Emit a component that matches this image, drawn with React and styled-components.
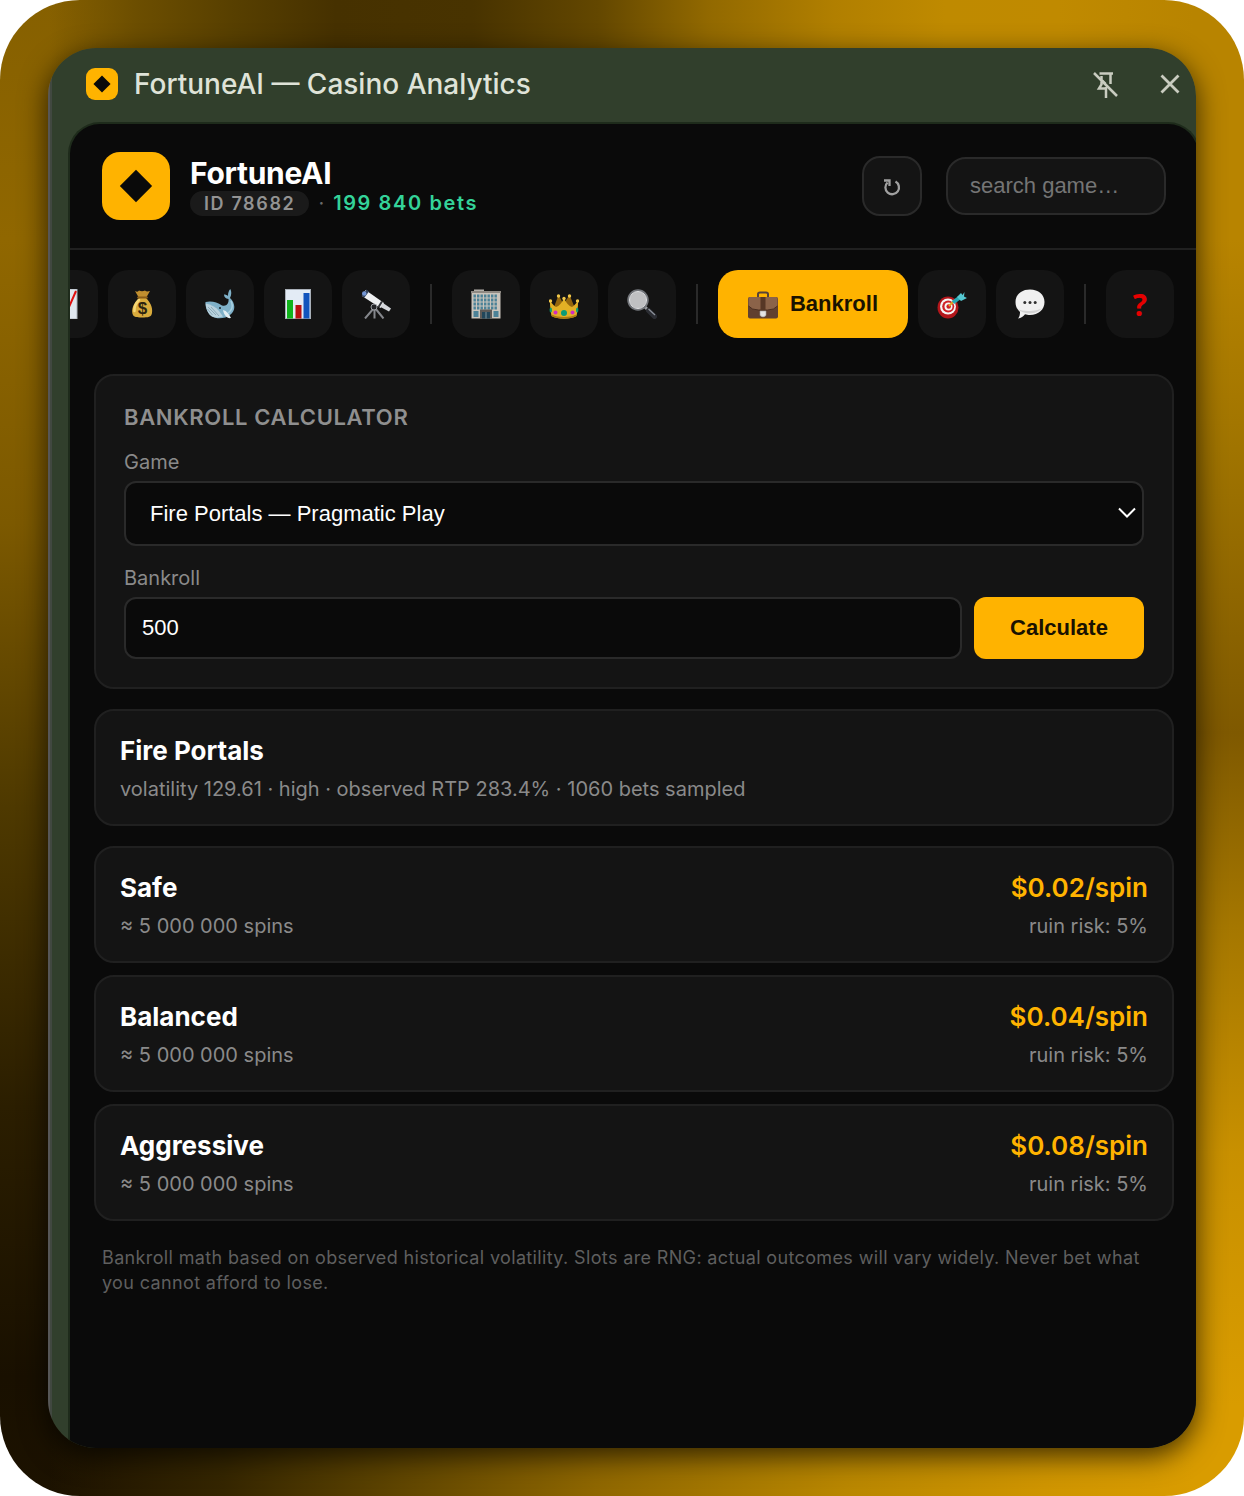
import { useState } from "react";
import styled, { createGlobalStyle, css } from "styled-components";

const GlobalStyle = createGlobalStyle`
  * {
    box-sizing: border-box;
  }
  body {
    margin: 0;
    background: #ffffff;
    font-family: Inter, "Liberation Sans", sans-serif;
  }
  button, input, select {
    font-family: "Liberation Sans", Arial, sans-serif;
    font-size: 22px;
  }
  h1, h2, h3, p {
    margin: 0;
  }
`;

// the top and bottom bands fade out at their ends into the side bands
const Backdrop = styled.div`
  display: flex;
  min-height: 100vh;
  padding: 48px;
  border-radius: 80px;
  background:
    linear-gradient(90deg, transparent 4%, #6c4e00 11%, #573f00 19%, #463100 27%, #483300 38%, #634700 48%, #926900 57%, #b17f00 67%, #bf8a00 76%, #c08a00 85%, #b8840000 96%) top / 100% 120px no-repeat,
    linear-gradient(90deg, transparent 4%, #291c00 11%, #352600 18%, #5c4300 31%, #8f6700 48%, #b98700 68%, #cf9500 84%, #d99c0000 96%) bottom / 100% 120px no-repeat,
    linear-gradient(180deg, #866000, #906700 16%, #7c5900 35%, #4e3900 54%, #2b1e00 74%, #191000 92%, #1c1200) left / 200px 100% no-repeat,
    linear-gradient(180deg, #b88400, #b88400 16%, #a07400 30%, #7f5900 49%, #a57700 62%, #c89000 77%, #d99c00 94%) right / 200px 100% no-repeat;
`;

const Window = styled.div`
  flex: 1;
  min-width: 0;
  display: flex;
  flex-direction: column;
  border-radius: 48px;
  overflow: hidden;
  background: linear-gradient(90deg, #565656 2px, #414840 2px 4px, #313f2c 4px);
  box-shadow: 0 8px 28px rgba(0, 0, 0, 0.7);
`;

const TitleBar = styled.div`
  display: flex;
  align-items: center;
  gap: 16px;
  height: 74px;
  padding: 0 12px 2px 38px;
  color: #dfe3d8;
  font-size: 28px;
  font-weight: 500;
`;

const TitleText = styled.span`
  flex: 1;
`;

const WindowButtons = styled.div`
  display: flex;
  gap: 37px;
`;

const WindowButton = styled.button`
  display: flex;
  padding: 0;
  border: none;
  background: none;
  color: #c9ccc0;
`;

const Panel = styled.main`
  flex: 1;
  min-width: 0;
  margin: 0 -4px 0 20px;
  border: 2px solid #1e2b1b;
  border-bottom: none;
  border-radius: 32px 32px 0 0;
  overflow: hidden;
  background: #0a0a0a;
`;

const Header = styled.header`
  display: flex;
  align-items: center;
  padding: 28px 32px;
  border-bottom: 2px solid #202020;
`;

const Brand = styled.div`
  flex: 1;
  margin-left: 20px;

  h1 {
    color: #ffffff;
    font-size: 30px;
    line-height: 35px;
    font-weight: 700;
    letter-spacing: -0.01em;
  }
`;

const Meta = styled.div`
  display: flex;
  align-items: center;
  gap: 9px;
  color: #6b6b6b;
  font-size: 20px;
  line-height: 25px;
`;

const IdBadge = styled.span`
  padding: 0 14px;
  border-radius: 13px;
  background: #1a1a1a;
  color: #939393;
  font-size: 18px;
  font-weight: 600;
  letter-spacing: 0.09em;
`;

const BetCount = styled.span`
  color: #34d399;
  font-weight: 600;
  letter-spacing: 0.08em;
`;

const RefreshButton = styled.button`
  display: grid;
  place-items: center;
  width: 60px;
  height: 60px;
  margin-right: 24px;
  border: 2px solid #2a2a2a;
  border-radius: 18px;
  background: #141414;
  color: #a0a0a0;
`;

const Search = styled.input`
  width: 220px;
  height: 58px;
  padding: 0 22px;
  border: 2px solid #2a2a2a;
  border-radius: 20px;
  background: #141414;
  color: #ffffff;

  &::placeholder {
    color: #757575;
  }
`;

const Tabs = styled.nav`
  display: flex;
  justify-content: flex-end;
  align-items: center;
  gap: 10px;
  padding: 20px 24px;
  overflow: hidden;
`;

const Tab = styled.button`
  flex: none;
  display: flex;
  align-items: center;
  justify-content: center;
  gap: 12px;
  width: 68px;
  height: 68px;
  padding: 0;
  border: none;
  border-radius: 20px;
  background: #141414;
  color: #1a1200;
  font-weight: 700;

  ${({ $active }) =>
    $active &&
    css`
      width: auto;
      padding: 0 30px;
      background: #ffb300;
    `}
`;

const TabDivider = styled.span`
  flex: none;
  width: 2px;
  height: 40px;
  margin: 0 10px;
  background: #2a2a2a;
`;

const Question = styled.span`
  color: #e60000;
  font-family: "Open Sans", sans-serif;
  font-size: 30px;
  font-weight: 700;
`;

const Content = styled.div`
  display: flex;
  flex-direction: column;
  gap: 20px;
  padding: 16px 24px 24px;
`;

const Card = styled.section`
  padding: ${({ $roomy }) => ($roomy ? "28px" : "24px")};
  border: 2px solid #202020;
  border-radius: 20px;
  background: #141414;
`;

const SectionTitle = styled.h2`
  color: #8f8f8f;
  font-size: 22px;
  line-height: 26px;
  font-weight: 600;
  letter-spacing: 0.03em;
`;

const Label = styled.label`
  display: block;
  margin: 20px 0 7px;
  color: #8a8a8a;
  font-size: 20px;
  line-height: 24px;
`;

const SelectWrap = styled.div`
  position: relative;

  svg {
    position: absolute;
    right: 8px;
    top: 26px;
    pointer-events: none;
  }
`;

const field = css`
  width: 100%;
  border: 2px solid #2a2a2a;
  border-radius: 12px;
  background: #0a0a0a;
  color: #ffffff;
`;

const GameSelect = styled.select`
  ${field}
  display: block;
  height: 65px;
  padding: 0 24px;
  appearance: none;
`;

const AmountInput = styled.input`
  ${field}
  flex: 1;
  min-width: 0;
  height: 62px;
  padding: 0 16px;
`;

const AmountRow = styled.div`
  display: flex;
  gap: 12px;
`;

const CalculateButton = styled.button`
  width: 170px;
  height: 62px;
  border: none;
  border-radius: 12px;
  background: #ffb300;
  color: #1a1200;
  font-weight: 700;
`;

const TierList = styled.div`
  display: flex;
  flex-direction: column;
  gap: 12px;
`;

const Row = styled.div`
  display: flex;
  justify-content: space-between;
  color: ${({ $muted }) => ($muted ? "#8a8a8a" : "#ffffff")};
  font-size: ${({ $muted }) => ($muted ? "20px" : "26px")};
  line-height: ${({ $muted }) => ($muted ? "22px" : "32px")};
  margin-top: ${({ $muted }) => ($muted ? "11px" : "0")};

  h3 {
    font-size: 26px;
    font-weight: 700;
  }
  strong {
    color: #ffb300;
    font-weight: 600;
  }
`;

const Disclaimer = styled.p`
  padding: 4px 8px;
  color: #5f5f5f;
  font-size: 18px;
  line-height: 25px;
  letter-spacing: 0.02em;
`;

const LogoTile = styled.span`
  flex: none;
  display: grid;
  place-items: center;
  width: ${({ $size }) => $size}px;
  height: ${({ $size }) => $size}px;
  border-radius: ${({ $size }) => ($size > 40 ? "18px" : "9px")};
  background: #ffb300;
`;

const Logo = ({ size, mark }) => (
  <LogoTile $size={size}>
    <svg width={mark} height={mark} viewBox="0 0 16 16">
      <path d="M8 0.4 15.6 8 8 15.6 0.4 8z" fill="#0a0a0a" />
    </svg>
  </LogoTile>
);

const Emoji = ({ children }) => (
  <svg width="30" height="30" viewBox="0 0 30 30" aria-hidden="true">
    {children}
  </svg>
);

const TrendIcon = () => (
  <Emoji>
    <rect x="2" y="0" width="26" height="30" fill="#dfe6ee" stroke="#aab2ba" />
    <path d="M4 24 10 14 15 20 20 18 27 2" fill="none" stroke="#e01010" strokeWidth="2" />
  </Emoji>
);

const MoneyBagIcon = () => (
  <Emoji>
    <path d="M8 2q3 1.500 4-.5 3 1.500 6 0 1.500 1.500 5 .5L19 9h-7z" fill="#c18f2f" />
    <path d="M12 9h7c4 4 7 9 6 15-.5 4-4 4.500-10 4.500S6 28 5.300 24C4.500 18 8 13 12 9z" fill="#d9ab3c" />
    <path d="M12 11c-3 3-5 7-4.500 11" fill="none" stroke="#f5d676" strokeWidth="2.500" strokeLinecap="round" />
    <path d="M11 8.500h9" stroke="#8a5d18" strokeWidth="1.800" strokeLinecap="round" />
    <text x="15.500" y="25" textAnchor="middle" fontFamily="Liberation Sans, sans-serif" fontSize="17" fontWeight="700" fill="#2b2410">$</text>
  </Emoji>
);

const WhaleIcon = () => (
  <Emoji>
    <path d="M.5 13C6 11.500 12 13 17 16.500c4.500 1.500 7-2 6.500-6.500-3-.5-4.500-2-4.500-4.500 1.500 0 3 .5 4 1.500 0-3 .8-5.500 2.300-7 1.500 3 1.200 6-.3 9C30.500 14 31 22 25 26c-4 3.500-13 4.500-18 1.500C3 25 0 19 .5 13z" fill="#7fb1c9" />
    <path d="M26 12c2.500 5 1 9-3 12" fill="none" stroke="#a8d0e0" strokeWidth="1.500" />
    <path d="M.7 14.500C6 15.500 11 18 14 22l4 5.500c-4 1.500-8 1.500-11 0C3.500 25.500 1 20 .7 14.500z" fill="#b9d2de" />
    <path d="M3 18l8 8M6 18l8 9M2.500 20l5 6" stroke="#7f9fae" strokeWidth=".8" />
    <path d="M18 21c4 1 6 4 8 8-4 1-7-3-8-8z" fill="#e3eef3" />
    <circle cx="15" cy="19" r="1" fill="#182830" />
  </Emoji>
);

const ChartIcon = () => (
  <Emoji>
    <rect x="2.500" y=".5" width="25" height="29" fill="#e3ebf5" stroke="#a9b0b8" />
    <rect x="4" y="11" width="6" height="18.500" fill="#11b31c" />
    <rect x="12.500" y="16" width="6" height="13.500" fill="#b81010" />
    <rect x="20.500" y="4" width="6" height="25.500" fill="#1254bd" />
  </Emoji>
);

const TelescopeIcon = () => (
  <Emoji>
    <path d="M13 19 4 29.500M13.500 19v10.500M14 19l8.500 10.500" stroke="#85878c" strokeWidth="2" />
    <path d="M4.500 1 23 14l-3.500 5L1 7z" fill="#eef0f2" />
    <path d="M22 14l8 5.500-2 3L19.500 18z" fill="#d5d8dc" />
    <path d="M21 12.500 17.500 18" stroke="#34363b" strokeWidth="2" />
    <path d="M5.500.5 8 2.500 3.500 8.500.5 7z" fill="#33435d" />
    <circle cx="3.200" cy="4.500" r="2.200" fill="#7295d4" />
    <circle cx="13" cy="18" r="3" fill="#222428" stroke="#9a9da2" />
  </Emoji>
);

const OfficeIcon = () => (
  <Emoji>
    <rect x="3" y=".5" width="10" height="3" fill="#b5b1ab" />
    <rect x=".5" y="3" width="29" height="26.500" fill="#c9c4bc" />
    <rect x="0" y="2" width="30" height="2" fill="#8e8983" />
    {[5.5, 9.5, 13.5, 17.5].map((y) =>
      [2.5, 6, 9.5, 13, 16.5, 20, 23.5].map((x) => (
        <rect key={`${x}-${y}`} x={x} y={y} width="2.400" height="3" fill="#4c8297" />
      ))
    )}
    <path d="M2.500 22h5v6h-5zM22.500 22h5v6h-5z" fill="#4c8297" />
    <path d="M9 20.500h12v9H9z" fill="#5d5a57" />
    <path d="M11 23h8v6.500h-8z" fill="#21465a" />
    <path d="M15 23v6.500" stroke="#81949c" />
  </Emoji>
);

const CrownIcon = () => (
  <Emoji>
    <path d="M5 18 9.500 6l5 9 6-9 5 12z" fill="#94660d" />
    <path d="M2.500 27C1.500 21 .8 16 1 12c2 2 4 5 6 6 3-1 6-4 8-9 2 5 5 8 8 9 2-1 4-4 6-6 .2 5-.5 10-1.500 15-6 3.500-19 3.500-25 0z" fill="#e2b025" />
    <path d="M3 26.500c6 3 18 3 24 0" fill="none" stroke="#a97a12" strokeWidth="1.500" />
    {[1.5, 9.5, 15, 20.5, 28.5].map((x, i) => (
      <circle key={x} cx={x} cy={i === 2 ? 9.5 : i % 2 ? 7 : 12} r="1.700" fill="#f1c84a" />
    ))}
    <circle cx="15" cy="24" r="3" fill="#0a9b76" />
    <circle cx="6.500" cy="23.500" r="2" fill="#d02bc4" />
    <circle cx="23.500" cy="23.500" r="2" fill="#d02bc4" />
    <ellipse cx="1.800" cy="21" rx="1.200" ry="2.500" fill="#0a9b76" />
    <ellipse cx="28.200" cy="21" rx="1.200" ry="2.500" fill="#0a9b76" />
  </Emoji>
);

const MagnifierIcon = () => (
  <Emoji>
    <path d="M18 18l4 4" stroke="#9b9ea2" strokeWidth="3" />
    <path d="M21.500 21.500l6 6" stroke="#2b2d33" strokeWidth="5" strokeLinecap="round" />
    <path d="M21.500 20l6.500 6" stroke="#8d929b" strokeWidth="1.200" />
    <circle cx="11" cy="11" r="9.500" fill="#bfc0c2" stroke="#73767b" strokeWidth="2.500" />
    <circle cx="11" cy="11" r="8.500" fill="none" stroke="#e2e3e5" strokeWidth="1" />
  </Emoji>
);

const BriefcaseIcon = () => (
  <Emoji>
    <path d="M10 8V5q0-1.500 2-1.500h6q2 0 2 1.500v3" fill="none" stroke="#584238" strokeWidth="2" />
    <rect x="0" y="8" width="30" height="21.500" rx="2" fill="#61402f" />
    <path d="M.5 9.500Q.5 8 2 8h26q1.500 0 1.500 1.500V17q-3 4-10 4h-9Q3.500 21 .5 17z" fill="#8b6349" />
    <path d="M.5 17q3 4 10 4h9q7 0 10-4" fill="none" stroke="#4a2e20" />
    <path d="M12.500 8h5v13h-5z" fill="#573725" />
    <path d="M12 22h6v4.500q-3 3-6 0z" fill="#e4e4e4" stroke="#9b9b9b" strokeWidth=".6" />
  </Emoji>
);

const TargetIcon = () => (
  <Emoji>
    <ellipse cx="11" cy="18.500" rx="10.500" ry="11" fill="#b3161b" />
    <circle cx="11" cy="17.500" r="8" fill="#f5f5f5" />
    <circle cx="11.200" cy="17.500" r="6" fill="#cf2026" />
    <circle cx="11.500" cy="17.500" r="4" fill="#f5f5f5" />
    <circle cx="11.700" cy="17.500" r="2.300" fill="#cf2026" />
    <path d="M12 17 18 11" stroke="#e2a324" strokeWidth="2" />
    <path d="M16 13.500 22 9" stroke="#28a9b5" strokeWidth="4" />
    <path d="M20 8l4-4 1.500 2L27.500 3l-.5 4.500 3 1.500-6 3z" fill="#55c8d2" />
  </Emoji>
);

const SpeechIcon = () => (
  <Emoji>
    <path d="M15 .5c8.500 0 14.500 5 14.500 12.500S23.500 26 15 26c-2 0-3.500-.2-5-.7-1.500 2-4 4-7 4.200 1.500-1.500 2-4 2-6.500C2 20.500.5 17 .5 13 .5 5.500 6.500.5 15 .5z" fill="#f0f0f0" />
    <path d="M3 20c5 6 19 6 24-1-4 3.500-20 4-24 1z" fill="#d2d2d2" />
    <circle cx="9.800" cy="13.500" r="1.500" fill="#303030" />
    <circle cx="15" cy="13.500" r="1.500" fill="#303030" />
    <circle cx="20.200" cy="13.500" r="1.500" fill="#303030" />
  </Emoji>
);

const UnpinIcon = () => (
  <svg width="28" height="28" viewBox="0 0 28 28" fill="none" stroke="currentColor" strokeWidth="2.500">
    <path d="M8.500 3.500h13.500M19.500 3.500V14M10.500 6v3M10.500 11.500v3L8 18.500h8M14.500 14l-4-4M15 17v11" />
    <path d="M3 3l23 23" />
  </svg>
);

const CloseIcon = () => (
  <svg width="28" height="28" viewBox="0 0 28 28" fill="none" stroke="currentColor" strokeWidth="2.800">
    <path d="M5.500 5.500l17 17M22.500 5.500l-17 17" />
  </svg>
);

const RefreshIcon = () => (
  <svg width="20" height="20" viewBox="0 0 20 20" fill="none" stroke="currentColor" strokeWidth="2.300">
    <path d="M13.500 5.500a6.800 6.800 0 1 1-8 1" />
    <path d="M2 4.500h5.500V10" />
  </svg>
);

const tabs = [
  { id: "trends", label: "Trends", icon: <TrendIcon /> },
  { id: "wins", label: "Wins", icon: <MoneyBagIcon /> },
  { id: "whales", label: "Whales", icon: <WhaleIcon /> },
  { id: "stats", label: "Stats", icon: <ChartIcon /> },
  { id: "explore", label: "Explore", icon: <TelescopeIcon /> },
  null,
  { id: "providers", label: "Providers", icon: <OfficeIcon /> },
  { id: "top", label: "Top", icon: <CrownIcon /> },
  { id: "lookup", label: "Lookup", icon: <MagnifierIcon /> },
  null,
  { id: "bankroll", label: "Bankroll", icon: <BriefcaseIcon /> },
  { id: "goals", label: "Goals", icon: <TargetIcon /> },
  { id: "chat", label: "Chat", icon: <SpeechIcon /> },
  null,
  { id: "help", label: "Help", icon: <Question>?</Question> },
];

const tiers = [
  { name: "Safe", bet: "$0.02/spin", spins: "5 000 000", risk: "5%" },
  { name: "Balanced", bet: "$0.04/spin", spins: "5 000 000", risk: "5%" },
  { name: "Aggressive", bet: "$0.08/spin", spins: "5 000 000", risk: "5%" },
];

const App = () => {
  const [active, setActive] = useState("bankroll");
  const [amount, setAmount] = useState("500");

  return (
    <>
      <GlobalStyle />
      <Backdrop>
        <Window>
          <TitleBar>
            <Logo size={32} mark={18} />
            <TitleText>FortuneAI — Casino Analytics</TitleText>
            <WindowButtons>
              <WindowButton aria-label="Unpin">
                <UnpinIcon />
              </WindowButton>
              <WindowButton aria-label="Close">
                <CloseIcon />
              </WindowButton>
            </WindowButtons>
          </TitleBar>
          <Panel>
            <Header>
              <Logo size={68} mark={34} />
              <Brand>
                <h1>FortuneAI</h1>
                <Meta>
                  <IdBadge>ID 78682</IdBadge>
                  <span>·</span>
                  <BetCount>199 840 bets</BetCount>
                </Meta>
              </Brand>
              <RefreshButton aria-label="Refresh">
                <RefreshIcon />
              </RefreshButton>
              <Search type="text" placeholder="search game…" aria-label="Search game" />
            </Header>
            <Tabs>
              {tabs.map((tab, i) =>
                tab ? (
                  <Tab
                    key={tab.id}
                    $active={tab.id === active}
                    aria-label={tab.label}
                    onClick={() => setActive(tab.id)}
                  >
                    {tab.icon}
                    {tab.id === active && <span>{tab.label}</span>}
                  </Tab>
                ) : (
                  <TabDivider key={i} />
                )
              )}
            </Tabs>
            <Content>
              <Card $roomy>
                <SectionTitle>BANKROLL CALCULATOR</SectionTitle>
                <Label htmlFor="game">Game</Label>
                <SelectWrap>
                  <GameSelect id="game">
                    <option>Fire Portals — Pragmatic Play</option>
                  </GameSelect>
                  <svg width="18" height="12" viewBox="0 0 18 12" fill="none" stroke="#ffffff" strokeWidth="2">
                    <path d="M1 1.500l8 8 8-8" />
                  </svg>
                </SelectWrap>
                <Label htmlFor="bankroll">Bankroll</Label>
                <AmountRow>
                  <AmountInput
                    id="bankroll"
                    value={amount}
                    onChange={(e) => setAmount(e.target.value)}
                  />
                  <CalculateButton>Calculate</CalculateButton>
                </AmountRow>
              </Card>
              <Card>
                <Row>
                  <h3>Fire Portals</h3>
                </Row>
                <Row $muted>
                  <span>volatility 129.61 · high · observed RTP 283.4% · 1060 bets sampled</span>
                </Row>
              </Card>
              <TierList>
                {tiers.map((tier) => (
                  <Card key={tier.name}>
                    <Row>
                      <h3>{tier.name}</h3>
                      <strong>{tier.bet}</strong>
                    </Row>
                    <Row $muted>
                      <span>≈ {tier.spins} spins</span>
                      <span>ruin risk: {tier.risk}</span>
                    </Row>
                  </Card>
                ))}
              </TierList>
              <Disclaimer>
                Bankroll math based on observed historical volatility. Slots are RNG: actual
                outcomes will vary widely. Never bet what you cannot afford to lose.
              </Disclaimer>
            </Content>
          </Panel>
        </Window>
      </Backdrop>
    </>
  );
};

export default App;
